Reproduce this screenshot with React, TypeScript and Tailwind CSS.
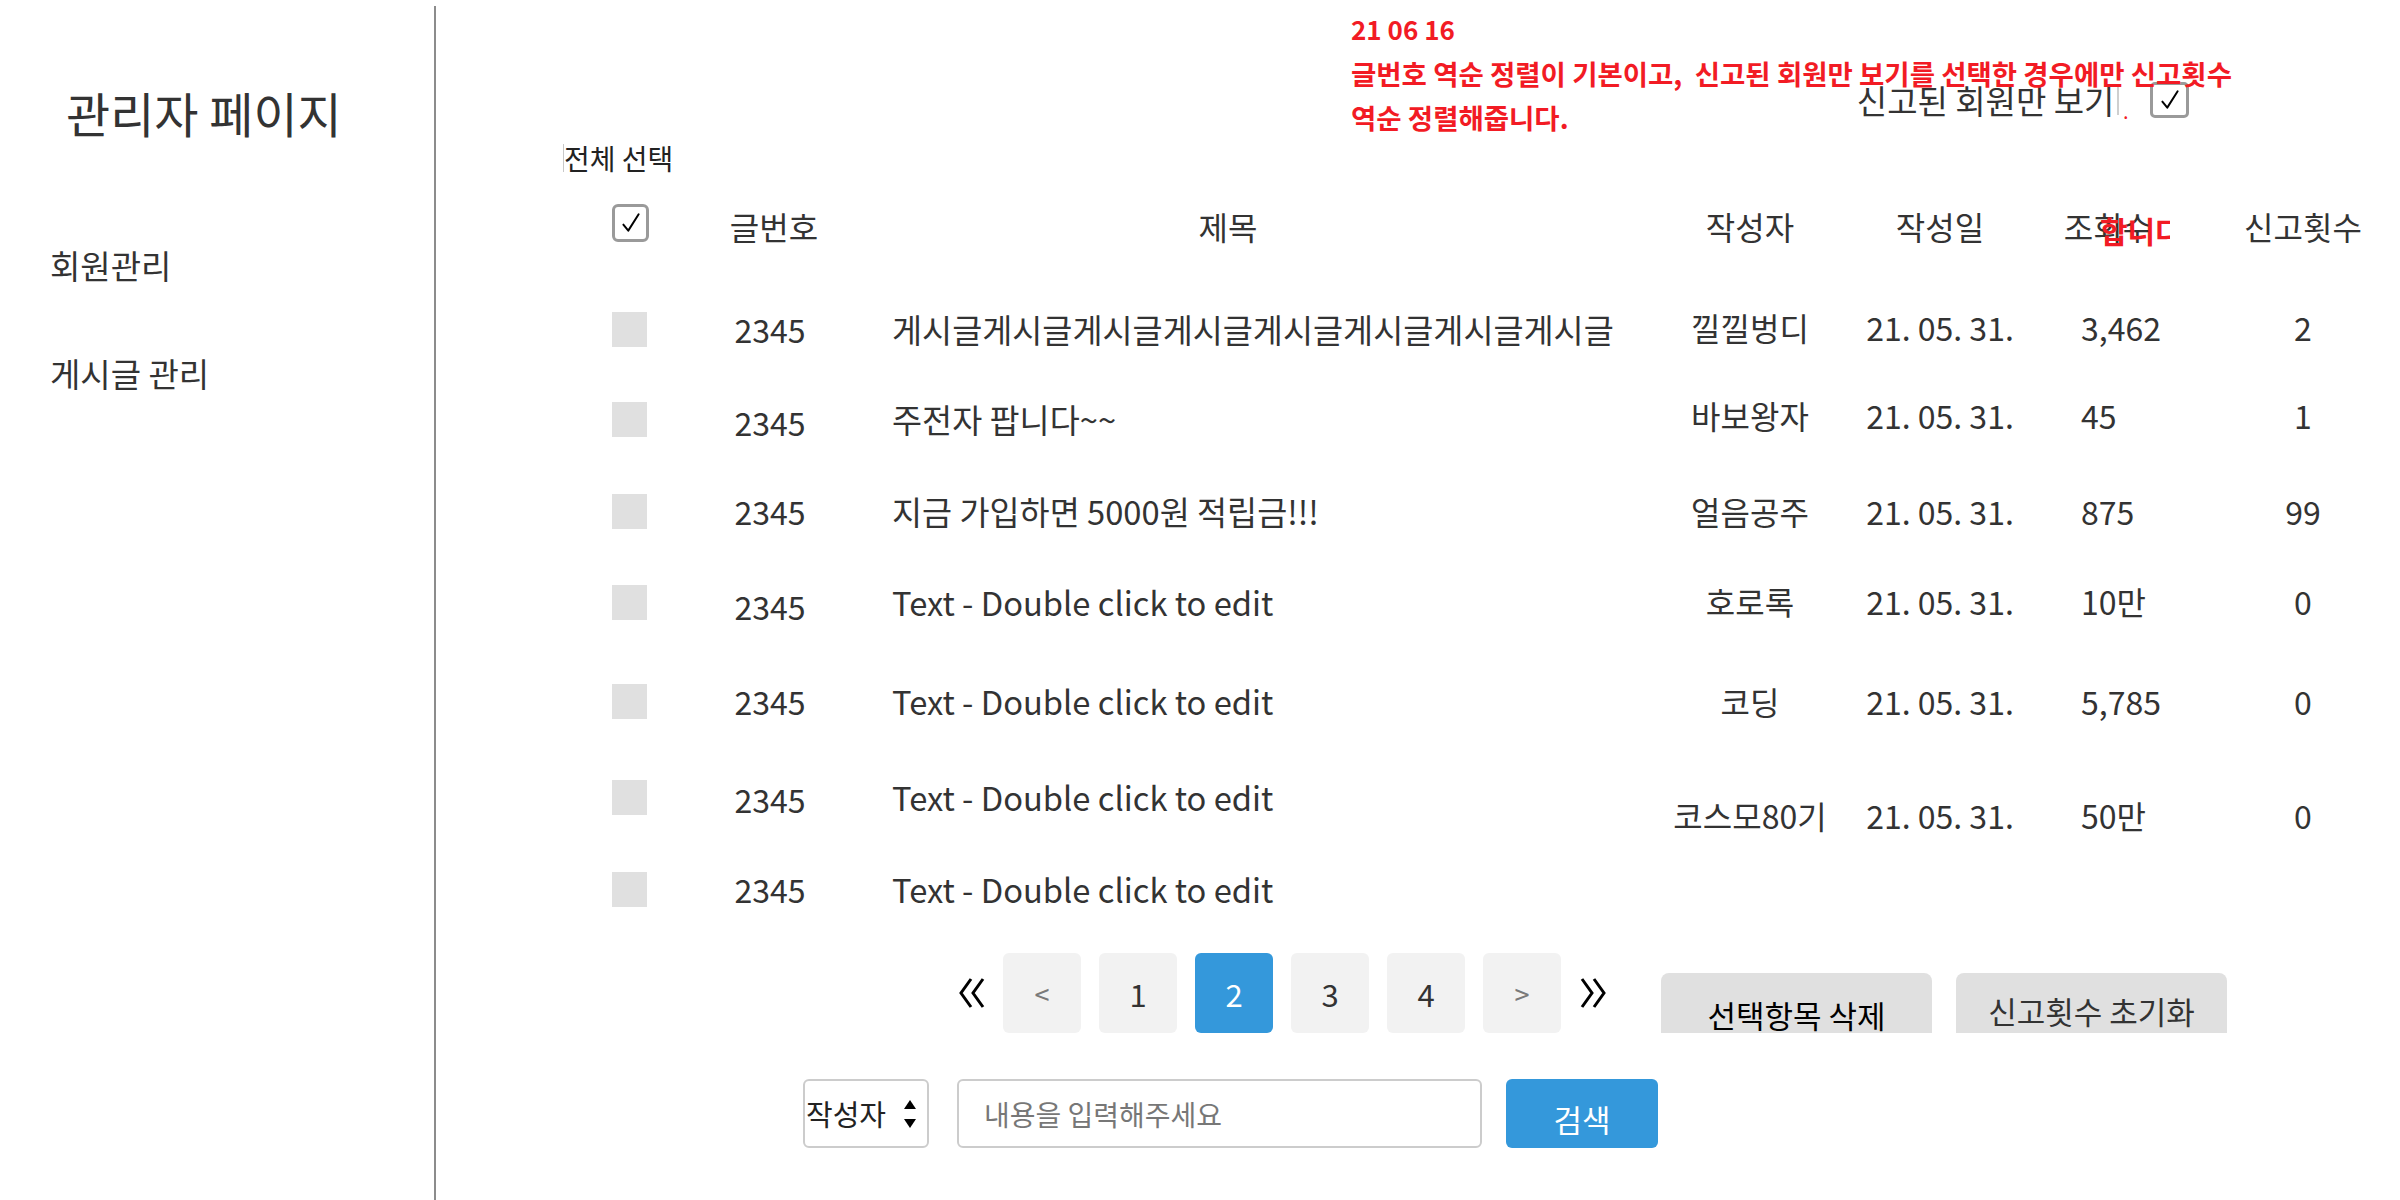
import React from 'react';

type Row = {
  title: string;
  author?: string;
  date?: string;
  views?: string;
  reports?: string;
  height: string;
  noPad: string;
  rightPad: string;
};

const rows: Row[] = [
  { title: '게시글게시글게시글게시글게시글게시글게시글게시글', author: '낄낄벙디', date: '21. 05. 31.', views: '3,462', reports: '2', height: 'h-[90px]', noPad: '', rightPad: 'pb-[4px]' },
  { title: '주전자 팝니다~~', author: '바보왕자', date: '21. 05. 31.', views: '45', reports: '1', height: 'h-[90px]', noPad: 'pt-[6px]', rightPad: 'pb-[8px]' },
  { title: '지금 가입하면 5000원 적립금!!!', author: '얼음공주', date: '21. 05. 31.', views: '875', reports: '99', height: 'h-[94px]', noPad: '', rightPad: '' },
  { title: 'Text - Double click to edit', author: '호로록', date: '21. 05. 31.', views: '10만', reports: '0', height: 'h-[88px]', noPad: 'pt-[8px]', rightPad: 'pb-[2px]' },
  { title: 'Text - Double click to edit', author: '코딩', date: '21. 05. 31.', views: '5,785', reports: '0', height: 'h-[110px]', noPad: '', rightPad: '' },
  { title: 'Text - Double click to edit', author: '코스모80기', date: '21. 05. 31.', views: '50만', reports: '0', height: 'h-[82px]', noPad: 'pt-[4px]', rightPad: 'pt-[36px]' },
  { title: 'Text - Double click to edit', height: 'h-[102px]', noPad: '', rightPad: '' },
];

const CheckMark = ({ size = 22 }: { size?: number }) => (
  <svg width={size} height={size} viewBox="0 0 22 22" fill="none">
    <path d="M4 12.5 L8.5 18 L18 3" stroke="#000" strokeWidth="1.8" strokeLinecap="round" strokeLinejoin="round" />
  </svg>
);

const DoubleChevron = ({ dir }: { dir: 'left' | 'right' }) => (
  <svg width="29" height="40" viewBox="0 0 29 40" fill="none">
    {dir === 'left' ? (
      <path d="M13 6 L3 20 L13 34 M25 6 L15 20 L25 34" stroke="#000" strokeWidth="3" />
    ) : (
      <path d="M4 6 L14 20 L4 34 M16 6 L26 20 L16 34" stroke="#000" strokeWidth="3" />
    )}
  </svg>
);

const PageButton = ({ label, active, muted }: { label: string; active?: boolean; muted?: boolean }) => (
  <div
    className={
      'w-[78px] h-[80px] rounded-[6px] flex items-center justify-center leading-none ' +
      (active ? 'bg-[#3498db] text-white text-[31px]' : muted ? 'bg-[#f2f2f2] text-[#7a7a7a] text-[27px]' : 'bg-[#f2f2f2] text-[#333] text-[31px]')
    }
  >
    {label}
  </div>
);

const Sidebar = () => (
  <aside className="w-[434px] shrink-0 text-[#333]">
    <h1 className="pt-[82px] pl-[66px] text-[48px] leading-[60px] font-normal">관리자 페이지</h1>
    <nav className="pl-[50px] text-[33px] leading-[40px]">
      <div className="mt-[103px]">회원관리</div>
      <div className="mt-[68px]">게시글 관리</div>
    </nav>
  </aside>
);

const App: React.FC = () => {
  return (
    <div className="relative flex min-h-screen w-full bg-white font-['Noto_Sans_CJK_KR','Noto_Sans',sans-serif] text-[#333]">
      <Sidebar />
      <div className="w-[2px] shrink-0 mt-[6px] bg-[#8c8c8c]" />

      <main className="flex-1 flex flex-col">
        {/* filter */}
        <div className="mt-[80px] h-[40px] flex items-center justify-end pr-[211px]">
          <span className="text-[33px] leading-[40px] text-[#333]">신고된 회원만 보기</span>
          <span className="ml-[3px] w-[2px] h-[30px] bg-[#cfcfcf]" />
          <span className="ml-[4px] self-end text-[14px] leading-none font-bold text-[#f21b24]">.</span>
          <div className="ml-[22px] w-[39px] h-[36px] rounded-[5px] border-[3px] border-[#9a9a9a] flex items-center justify-center">
            <CheckMark size={24} />
          </div>
        </div>

        <div className="mt-[20px] ml-[127px] h-[36px] flex items-center">
          <span className="w-[1px] h-[28px] bg-[#c8c8c8]" />
          <span className="text-[28px] leading-[36px] text-[#222]">전체 선택</span>
        </div>

        {/* header */}
        <div className="mt-[14px] ml-[176px] h-[72px] grid grid-cols-[88px_140px_820px_180px_200px_166px_194px] items-center text-[32px] leading-[40px]">
          <div>
            <div className="w-[37px] h-[38px] rounded-[6px] border-[3px] border-[#9a9a9a] flex items-center justify-center -mt-[6px]">
              <CheckMark size={24} />
            </div>
          </div>
          <div className="text-center pl-[8px]">글번호</div>
          <div className="text-center pr-[44px]">제목</div>
          <div className="text-center">작성자</div>
          <div className="text-center">작성일</div>
          <div className="text-center pr-[30px]">조회수</div>
          <div className="text-center">신고횟수</div>
        </div>

        {/* rows */}
        <div className="mt-[22px] ml-[176px] flex flex-col text-[32px] leading-[40px]">
          {rows.map((r, i) => (
            <div key={i} className={r.height + ' grid grid-cols-[88px_140px_820px_180px_200px_166px_194px] items-center'}>
              <div>
                <div className="w-[35px] h-[35px] bg-[#e0e0e0]" />
              </div>
              <div className={'text-center ' + r.noPad}>2345</div>
              <div className="pl-[52px] whitespace-nowrap text-[32.7px]">{r.title}</div>
              <div className={'text-center whitespace-nowrap ' + r.rightPad}>{r.author}</div>
              <div className={'text-center whitespace-nowrap ' + r.rightPad}>{r.date}</div>
              <div className={'pl-[41px] ' + r.rightPad}>{r.views}</div>
              <div className={'text-center ' + r.rightPad}>{r.reports}</div>
            </div>
          ))}
        </div>

        {/* pagination + actions */}
        <div className="mt-[13px] ml-[522px] h-[80px] flex items-center">
          <DoubleChevron dir="left" />
          <div className="ml-[16px] flex gap-[18px]">
            <PageButton label="<" muted />
            <PageButton label="1" />
            <PageButton label="2" active />
            <PageButton label="3" />
            <PageButton label="4" />
            <PageButton label=">" muted />
          </div>
          <div className="ml-[17px]">
            <DoubleChevron dir="right" />
          </div>
          <div className="ml-[54px] self-end w-[271px] h-[60px] rounded-t-[8px] bg-[#e0e0e0] flex items-end justify-center">
            <span className="text-[31px] leading-[36px] text-black">선택항목 삭제</span>
          </div>
          <div className="ml-[24px] self-end w-[271px] h-[60px] rounded-t-[8px] bg-[#e0e0e0] flex items-center justify-center pt-[16px]">
            <span className="text-[31px] leading-[38px] text-[#333]">신고횟수 초기화</span>
          </div>
        </div>

        {/* search */}
        <div className="mt-[46px] ml-[367px] h-[69px] flex items-stretch">
          <div className="w-[126px] rounded-[6px] border-2 border-[#cccccc] flex items-center justify-between pl-[1px] pr-[10px]">
            <span className="text-[29px] leading-none text-[#222]">작성자</span>
            <svg width="14" height="34" viewBox="0 0 14 34">
              <path d="M7 3 L13 12 L1 12 Z" fill="#000" />
              <path d="M1 22 L13 22 L7 31 Z" fill="#000" />
            </svg>
          </div>
          <div className="ml-[28px] w-[525px] rounded-[6px] border-2 border-[#cccccc] flex items-center pl-[25px]">
            <span className="text-[28px] leading-none text-[#777]">내용을 입력해주세요</span>
          </div>
          <div className="ml-[24px] w-[152px] rounded-[6px] bg-[#3498db] flex items-center justify-center pt-[10px]">
            <span className="text-[31px] leading-none text-white">검색</span>
          </div>
        </div>
      </main>

      {/* red annotation */}
      <div className="absolute left-[1351px] top-[7px] text-[27.5px] leading-[44px] font-bold text-[#f21b24] whitespace-nowrap">
        <div className="text-[26px]">21 06 16</div>
        <div>글번호 역순 정렬이 기본이고,&nbsp; 신고된 회원만 보기를 선택한 경우에만 신고횟수</div>
        <div>역순 정렬해줍니다.</div>
      </div>
      <div className="absolute left-[2100px] top-[212px] w-[70px] overflow-hidden whitespace-nowrap text-[30px] leading-[36px] font-bold text-[#f21b24]">
        합니다
      </div>
    </div>
  );
};

export default App;
